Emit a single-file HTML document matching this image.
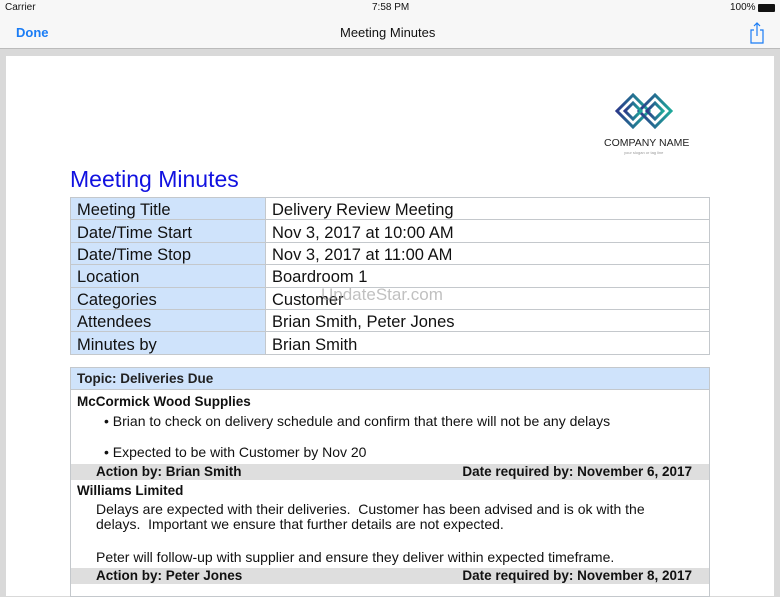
<!DOCTYPE html>
<html><head><style>
*{margin:0;padding:0;box-sizing:border-box}
body{width:780px;height:585px;overflow:hidden;background:#d9d9d9;font-family:"Liberation Sans",sans-serif;position:relative;color:#111}
.status{position:absolute;top:0;left:0;width:780px;height:17px;background:#f7f7f7;font-size:10px}
.nav{position:absolute;top:17px;left:0;width:780px;height:32px;background:#f7f7f7;border-bottom:1px solid #bbb}
.page{position:absolute;left:6px;top:56px;width:768px;height:540px;background:#fff}
.a{position:absolute;white-space:nowrap}
table{border-collapse:collapse;position:absolute;left:70px;top:197px;width:640px;font-size:16.5px}
td{border:1px solid #c4c8cc;height:22.4px;padding:3px 6px 0;line-height:18px}
td.l{background:#cfe3fb;width:195px}
.topic{position:absolute;left:70px;top:367px;width:640px;height:230px;border:1px solid #c4c8cc;font-size:14px;background:#fff}
.th{height:22px;background:#cfe3fb;border-bottom:1px solid #c4c8cc;padding:3px 6px;font-weight:bold;color:#222;font-size:13.5px}
.act{position:absolute;left:0;width:638px;height:16px;background:#dedede;font-weight:bold;padding:0 17px 0 25px;line-height:16px;font-size:13.5px}
.act span{float:right}
</style></head><body>
<div class="status"><span class="a" style="left:5px;top:2px">Carrier</span><span class="a" style="left:372px;top:2px">7:58 PM</span><span class="a" style="left:730px;top:2px">100%</span><div class="a" style="left:758px;top:4px;width:17px;height:8px;background:#111;border-radius:1px"></div></div>
<div class="nav"><span class="a" style="left:16px;top:8px;color:#1a7cf5;font-size:13px;font-weight:bold">Done</span><span class="a" style="left:340px;top:8px;font-size:13px">Meeting Minutes</span>
<svg class="a" style="left:749px;top:4px" width="16" height="24" viewBox="0 0 16 24"><path d="M5 9H2v13h12V9h-3M8 2v13M5 5l3-3 3 3" fill="none" stroke="#1a7cf5" stroke-width="1.2"/></svg></div>
<div class="page"></div>
<svg class="a" style="left:615px;top:93px" width="62" height="40" viewBox="0 0 62 40"><defs><linearGradient id="g"><stop offset="0" stop-color="#2b3a8a"/><stop offset="1" stop-color="#1fa89a"/></linearGradient></defs><g fill="none" stroke="url(#g)" stroke-width="3"><path d="M18 2L2 18l16 16 16-16z"/><path d="M40 2L24 18l16 16 16-16z"/><path d="M18 10l-8 8 8 8 8-8z"/><path d="M40 10l-8 8 8 8 8-8z"/></g></svg>
<span class="a" style="left:604px;top:137px;font-size:10.5px;color:#222">COMPANY NAME</span>
<span class="a" style="left:624px;top:150px;font-size:4px;color:#999">your slogan or tag line</span>
<span class="a" style="left:70px;top:166px;font-size:23px;color:#1111e0">Meeting Minutes</span>
<table>
<tr><td class="l">Meeting Title</td><td>Delivery Review Meeting</td></tr>
<tr><td class="l">Date/Time Start</td><td>Nov 3, 2017 at 10:00 AM</td></tr>
<tr><td class="l">Date/Time Stop</td><td>Nov 3, 2017 at 11:00 AM</td></tr>
<tr><td class="l">Location</td><td>Boardroom 1</td></tr>
<tr><td class="l">Categories</td><td>Customer</td></tr>
<tr><td class="l">Attendees</td><td>Brian Smith, Peter Jones</td></tr>
<tr><td class="l">Minutes by</td><td>Brian Smith</td></tr>
</table>
<span class="a" style="left:321px;top:285px;font-size:17px;color:rgba(150,150,150,.6)">UpdateStar.com</span>
<div class="topic"><div class="th">Topic: Deliveries Due</div>
<span class="a" style="left:6px;top:26px;font-weight:bold;font-size:13.5px">McCormick Wood Supplies</span>
<span class="a" style="left:33px;top:45px">• Brian to check on delivery schedule and confirm that there will not be any delays</span>
<span class="a" style="left:33px;top:76px">• Expected to be with Customer by Nov 20</span>
<div class="act" style="top:96px">Action by: Brian Smith<span>Date required by: November 6, 2017</span></div>
<span class="a" style="left:6px;top:115px;font-weight:bold;font-size:13.5px">Williams Limited</span>
<span class="a" style="left:25px;top:134px;line-height:15px">Delays are expected with their deliveries.&nbsp; Customer has been advised and is ok with the<br>delays.&nbsp; Important we ensure that further details are not expected.</span>
<span class="a" style="left:25px;top:181px">Peter will follow-up with supplier and ensure they deliver within expected timeframe.</span>
<div class="act" style="top:200px">Action by: Peter Jones<span>Date required by: November 8, 2017</span></div>
</div>
</body></html>
